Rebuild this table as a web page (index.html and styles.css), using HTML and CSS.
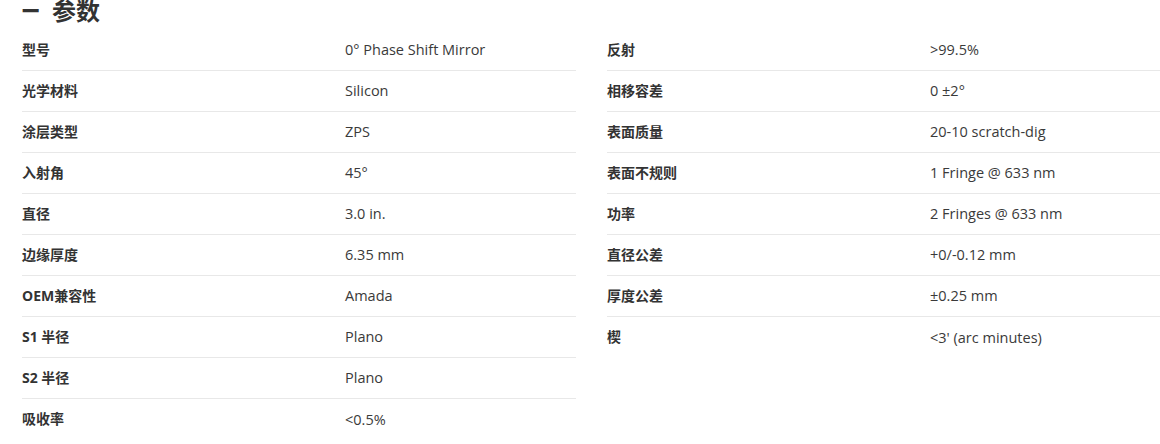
FILE: index.html
```html
<!DOCTYPE html>
<html lang="zh-CN">
<head>
<meta charset="utf-8">
<title>参数</title>
<link rel="stylesheet" href="styles.css">
</head>
<body>
<section class="specs">
  <h2 class="title"><span class="dash">一</span>参数</h2>
  <div class="cols">
    <div class="col">
      <div class="row"><div class="label">型号</div><div class="value">0° Phase Shift Mirror</div></div>
      <div class="row"><div class="label">光学材料</div><div class="value">Silicon</div></div>
      <div class="row"><div class="label">涂层类型</div><div class="value">ZPS</div></div>
      <div class="row"><div class="label">入射角</div><div class="value">45°</div></div>
      <div class="row"><div class="label">直径</div><div class="value">3.0 in.</div></div>
      <div class="row"><div class="label">边缘厚度</div><div class="value">6.35 mm</div></div>
      <div class="row"><div class="label">OEM兼容性</div><div class="value">Amada</div></div>
      <div class="row"><div class="label">S1 半径</div><div class="value">Plano</div></div>
      <div class="row"><div class="label">S2 半径</div><div class="value">Plano</div></div>
      <div class="row"><div class="label">吸收率</div><div class="value">&lt;0.5%</div></div>
    </div>
    <div class="col">
      <div class="row"><div class="label">反射</div><div class="value">&gt;99.5%</div></div>
      <div class="row"><div class="label">相移容差</div><div class="value">0 ±2°</div></div>
      <div class="row"><div class="label">表面质量</div><div class="value">20-10 scratch-dig</div></div>
      <div class="row"><div class="label">表面不规则</div><div class="value">1 Fringe @ 633 nm</div></div>
      <div class="row"><div class="label">功率</div><div class="value">2 Fringes @ 633 nm</div></div>
      <div class="row"><div class="label">直径公差</div><div class="value">+0/-0.12 mm</div></div>
      <div class="row"><div class="label">厚度公差</div><div class="value">±0.25 mm</div></div>
      <div class="row"><div class="label">楔</div><div class="value">&lt;3' (arc minutes)</div></div>
    </div>
  </div>
</section>
</body>
</html>
```
FILE: styles.css
```css
html, body {
  margin: 0;
  padding: 0;
  background: #ffffff;
  overflow: hidden;
}
body {
  font-family: "Open Sans", "Noto Sans CJK SC", sans-serif;
  color: #333333;
  font-size: 14px;
}
.specs {
  padding: 0 0 0 22px;
}
.title {
  margin: -2px 0 2px 0;
  height: 30px;
  font-size: 24px;
  line-height: 24px;
  font-weight: 700;
  color: #333333;
  font-family: "Noto Sans CJK SC", sans-serif;
  display: flex;
  align-items: flex-start;
}
.dash {
  display: inline-block;
  width: 30px;
  transform: scaleX(0.72);
  transform-origin: left center;
}
.cols {
  display: grid;
  grid-template-columns: 554px 553px;
  column-gap: 31px;
  align-items: start;
}
.row {
  display: flex;
  align-items: center;
  box-sizing: border-box;
  height: 41px;
  padding-bottom: 1px;
  border-bottom: 1px solid #e8e8e8;
}
.row:last-child {
  border-bottom: none;
}
.label {
  width: 323px;
  flex: none;
  padding-bottom: 2px;
  font-weight: 700;
  font-family: "Open Sans", "Noto Sans CJK SC", sans-serif;
  color: #333333;
}
.value {
  font-size: 14.5px;
  color: #3a3a3a;
}
```
